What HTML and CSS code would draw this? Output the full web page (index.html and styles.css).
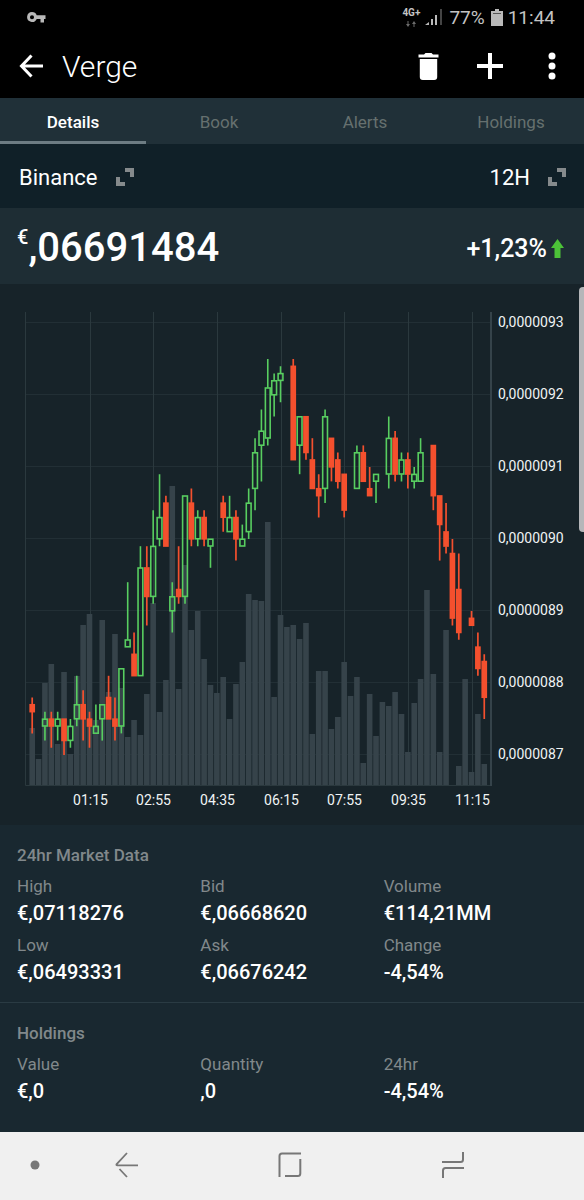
FILE: index.html
```html
<!DOCTYPE html>
<html lang="en">
<head>
    <meta charset="UTF-8">
    <meta name="viewport" content="width=device-width, initial-scale=1.0">
    <title>Verge</title>
    <link rel="stylesheet" href="styles.css">
</head>
<body>
    <div class="statusbar">
        <svg class="key" width="19" height="11" viewBox="0 0 19 11">
            <path fill="#b9b9b9" fill-rule="evenodd" d="M5 0a5 5 0 0 1 4.700 3.300H18.500V7H17v3.500h-3.500V7H9.700A5 5 0 1 1 5 0zM5 3.200a2 2 0 1 0 0 4.100 2 2 0 0 0 0-4.100z"/>
        </svg>
        <div class="network">
            <span>4G+</span>
            <svg width="10" height="6" viewBox="0 0 10 6">
                <path fill="#6b6b6b" d="M1.500 0h1v3h1.500L2 6 0 3h1.500zM7.500 6h1V3H10L8 0 6 3h1.500z"/>
            </svg>
        </div>
        <svg class="signal" width="17" height="17" viewBox="0 0 17 17">
            <path fill="#b9b9b9" d="M0 16l4-3v3zM6 10h2v6H6zM10 6h2v10h-2z"/>
            <path fill="#444" d="M15 0h2v16h-2z"/>
        </svg>
        <span class="percent">77%</span>
        <svg class="battery" width="12" height="17" viewBox="0 0 12 17">
            <path fill="#b9b9b9" d="M4 0h4v2h4v15H0V2h4z"/>
            <path fill="#555" d="M2 4h8v1H2z"/>
        </svg>
        <span>11:44</span>
    </div>

    <header class="appbar">
        <button class="back" aria-label="Back">
            <svg width="24" height="24" viewBox="0 0 24 24">
                <path d="M24 12H3M12.500 1.500L2.500 12l10 10.500" fill="none" stroke="#fff" stroke-width="3"/>
            </svg>
        </button>
        <h1>Verge</h1>
        <button aria-label="Delete">
            <svg width="21" height="27" viewBox="0 0 21 27">
                <path fill="#fff" d="M6 1.500L7.500 0h6L15 1.500h5.500v3H.5v-3zM1.800 6h17.400v18a3 3 0 0 1-3 3H4.800a3 3 0 0 1-3-3z"/>
            </svg>
        </button>
        <button aria-label="Add">
            <svg width="26" height="26" viewBox="0 0 26 26">
                <path fill="#fff" d="M11 0h4v11h11v4H15v11h-4V15H0v-4h11z"/>
            </svg>
        </button>
        <button aria-label="More">
            <svg width="8" height="28" viewBox="0 0 8 28">
                <g fill="#fff"><circle cx="4" cy="4" r="3.500"/><circle cx="4" cy="14" r="3.500"/><circle cx="4" cy="24" r="3.500"/></g>
            </svg>
        </button>
    </header>

    <nav class="tabs">
        <a href="#details" class="active">Details</a>
        <a href="#book">Book</a>
        <a href="#alerts">Alerts</a>
        <a href="#holdings">Holdings</a>
    </nav>

    <div class="market">
        <button>Binance
            <svg width="18" height="18" viewBox="0 0 18 18"><path fill="#858a8c" d="M9 0h9v9h-4V4H9zM0 9h4v5h5v4H0z"/></svg>
        </button>
        <button>12H
            <svg width="18" height="18" viewBox="0 0 18 18"><path fill="#858a8c" d="M9 0h9v9h-4V4H9zM0 9h4v5h5v4H0z"/></svg>
        </button>
    </div>

    <div class="price">
        <div class="amount"><sup>€</sup><span>,06691484</span></div>
        <div class="change">+1,23%
            <svg width="13" height="19" viewBox="0 0 13 19"><path fill="#4cc238" d="M6.500 0L13 9H9.500v10h-6V9H0z"/></svg>
        </div>
    </div>

    <main id="details">
        <div class="scrollbar"></div>
        <svg id="chart" viewBox="0 0 584 541" role="img" aria-label="Price chart"></svg>

        <section>
            <h2>24hr Market Data</h2>
            <dl>
                <div><dt>High</dt><dd>€,07118276</dd></div>
                <div><dt>Bid</dt><dd>€,06668620</dd></div>
                <div><dt>Volume</dt><dd>€114,21MM</dd></div>
                <div><dt>Low</dt><dd>€,06493331</dd></div>
                <div><dt>Ask</dt><dd>€,06676242</dd></div>
                <div><dt>Change</dt><dd>-4,54%</dd></div>
            </dl>
        </section>
        <section>
            <h2>Holdings</h2>
            <dl>
                <div><dt>Value</dt><dd>€,0</dd></div>
                <div><dt>Quantity</dt><dd>,0</dd></div>
                <div><dt>24hr</dt><dd>-4,54%</dd></div>
            </dl>
        </section>
    </main>

    <footer class="navbar">
        <button aria-label="Hide bar">
            <svg width="10" height="10" viewBox="0 0 10 10"><circle cx="5" cy="5" r="4.500" fill="#777"/></svg>
        </button>
        <button aria-label="Back">
            <svg width="24" height="26" viewBox="0 0 24 26"><path d="M12 1L1.500 12.300q-.5 1 .8 1H23M4.500 17L12 25" fill="none" stroke="#777" stroke-width="1.800"/></svg>
        </button>
        <button aria-label="Home">
            <svg width="24" height="26" viewBox="0 0 24 26"><path d="M1.500 25V4q0-2.500 2.500-2.500h19M22.300 7v14.500q0 2.500-2.500 2.500H7" fill="none" stroke="#777" stroke-width="2"/></svg>
        </button>
        <button aria-label="Recents">
            <svg width="24" height="26" viewBox="0 0 24 26"><path d="M22 0v7.500q0 2.500-2.500 2.500H1M2 26v-7.500Q2 16 4.500 16H23" fill="none" stroke="#777" stroke-width="2"/></svg>
        </button>
    </footer>

    <script>
        // [high, low, body top, body bottom, colour, volume], prices are steps above 0,0000087
        const candles = [
            [8, 3, 7, 6, 'r', 57], [0, 0, 0, 0, '', 26], [6, 2, 5, 4, 'g', 102], [6, 1, 5, 4, 'r', 121],
            [6, 2, 5, 4, 'g', 41], [5, 0, 5, 2, 'r', 113], [5, 1, 4, 2, 'g', 31], [11, 4, 7, 5, 'g', 109],
            [9, 2, 7, 5, 'r', 160], [6, 1, 5, 4, 'r', 171], [7, 3, 4, 3, 'g', 65], [7, 2, 7, 5, 'g', 165],
            [11, 5, 8, 5, 'r', 93], [8, 2, 5, 4, 'r', 151], [12, 3, 12, 4, 'g', 97], [24, 15, 16, 15, 'g', 48],
            [17, 11, 14, 11, 'r', 65], [29, 11, 26, 11, 'g', 50], [29, 18, 26, 22, 'r', 91], [34, 21, 29, 22, 'g', 182],
            [39, 29, 33, 30, 'g', 73], [36, 29, 35, 29, 'r', 105], [24, 17, 22, 20, 'g', 299], [29, 21, 23, 22, 'r', 96],
            [36, 21, 36, 22, 'g', 220], [37, 29, 35, 30, 'r', 155], [34, 29, 33, 30, 'g', 174], [34, 29, 33, 30, 'r', 126],
            [30, 26, 30, 29, 'g', 100], [0, 0, 0, 0, '', 92], [36, 31, 35, 33, 'r', 108], [36, 31, 33, 31, 'g', 66],
            [34, 27, 33, 30, 'r', 101], [32, 29, 30, 29, 'g', 123], [37, 30, 35, 31, 'g', 191], [44, 34, 42, 37, 'g', 185],
            [48, 38, 45, 43, 'g', 184], [55, 43, 51, 44, 'g', 263], [53, 47, 52, 50, 'g', 88], [54, 49, 53, 52, 'g', 170],
            [0, 0, 0, 0, '', 158], [55, 41, 54, 41, 'r', 160], [47, 39, 47, 43, 'g', 146], [47, 41, 47, 42, 'r', 162],
            [44, 37, 41, 37, 'r', 51], [39, 33, 37, 36, 'r', 114], [48, 35, 47, 37, 'g', 114], [44, 38, 44, 40, 'r', 56],
            [42, 37, 41, 38, 'r', 68], [39, 33, 39, 34, 'r', 123], [0, 0, 0, 0, '', 89], [43, 37, 42, 37, 'g', 108],
            [43, 38, 42, 38, 'r', 22], [40, 36, 37, 36, 'r', 91], [39, 35, 39, 38, 'g', 49], [0, 0, 0, 0, '', 83],
            [47, 37, 44, 39, 'g', 79], [45, 38, 44, 39, 'r', 93], [42, 38, 41, 39, 'g', 71], [42, 37, 41, 39, 'r', 33],
            [40, 37, 39, 38, 'g', 82], [44, 38, 42, 38, 'g', 106], [0, 0, 0, 0, '', 195], [43, 34, 43, 36, 'r', 111],
            [36, 27, 36, 32, 'r', 33], [35, 28, 31, 29, 'r', 155], [30, 18, 28, 19, 'r', 0], [28, 16, 23, 17, 'r', 19],
            [0, 0, 0, 0, '', 106], [20, 18, 19, 18, 'r', 13], [17, 11, 15, 12, 'r', 71], [14, 5, 13, 8, 'r', 21]
        ];
        const times = ['01:15', '02:55', '04:35', '06:15', '07:55', '09:35', '11:15'];
        const bottom = 501;

        function xOf(i) {
            return 32.2 + i * 6.367;
        }

        function yOf(price) {
            return 471 - price * 7.2;
        }

        function drawChart() {
            let svg = '';

            for (let i = 0; i < 7; i++) {
                const y = Math.round(yOf(i * 10)) - 0.5;
                svg += `<line class="grid" x1="25" x2="490" y1="${y}" y2="${y}"/>`;
                svg += `<text class="label" x="498" y="${y + 4.5}">0,00000${87 + i}</text>`;
            }
            times.forEach((time, i) => {
                const x = Math.round(xOf(9 + i * 10)) + 0.5;
                svg += `<line class="grid vertical" x1="${x}" x2="${x}" y1="28" y2="${bottom}"/>`;
                svg += `<text class="label time" x="${x}" y="521">${time}</text>`;
            });
            svg += `<path class="frame" d="M25.500 28V501.500H491"/><path class="axis" d="M491 28V502"/>`;

            candles.forEach((c, i) => {
                const x = xOf(i);
                svg += `<rect class="volume" x="${x - 2.8}" y="${bottom - c[5]}" width="5.600" height="${c[5]}"/>`;
            });
            candles.forEach((c, i) => {
                const [high, low, top, base, colour] = c;
                const x = xOf(i);
                if (colour === '') return;
                const wick = `<path d="M${x} ${yOf(high)}V${yOf(top)}M${x} ${yOf(base)}V${yOf(low)}"/>`;
                const inset = colour === 'g' ? 2.4 : 2;
                const body = `<rect x="${x - inset}" y="${yOf(top) + 0.2}" width="${inset * 2}" height="${(top - base) * 7.2 - 0.4}"/>`;
                svg += `<g class="${colour === 'g' ? 'up' : 'down'}">${wick}${body}</g>`;
            });

            document.getElementById('chart').innerHTML = svg;
        }

        drawChart();
    </script>
</body>
</html>
```

FILE: styles.css
```css
* {
    box-sizing: border-box;
}

body {
    margin: 0;
    min-height: 100vh;
    display: flex;
    flex-direction: column;
    background-color: #192830;
    color: #fff;
    font-family: Roboto, "Liberation Sans", sans-serif;
}

button {
    padding: 0;
    border: none;
    background: none;
    color: inherit;
    font: inherit;
    cursor: pointer;
}

svg {
    display: block;
}

.statusbar {
    display: flex;
    align-items: center;
    height: 34px;
    padding: 0 29px 0 27px;
    background-color: #000;
    color: #c4c4c4;
    font-size: 19px;
}

.key {
    margin-right: auto;
}

.network {
    display: flex;
    flex-direction: column;
    align-items: center;
    gap: 3px;
    margin-right: 5px;
    font-size: 10px;
    font-weight: bold;
    line-height: 10px;
}

.signal {
    margin-right: 7px;
}

.battery {
    margin: 0 5px 0 6px;
}

.appbar {
    display: flex;
    align-items: center;
    height: 64px;
    padding: 0 1px 0 19px;
    background-color: #000;
}

.appbar h1 {
    flex: 1;
    margin: 0;
    font-size: 30px;
    font-weight: 300;
}

.appbar button {
    display: flex;
    justify-content: center;
    align-items: center;
    width: 62px;
    height: 62px;
}

.appbar .back {
    justify-content: flex-start;
    width: 43px;
}

.tabs {
    display: flex;
    height: 46px;
    background-color: #203038;
}

.tabs a {
    flex: 1;
    border-bottom: 3px solid transparent;
    color: #66706f;
    font-size: 17px;
    line-height: 48px;
    text-align: center;
    text-decoration: none;
}

.tabs .active {
    border-color: #6d7c83;
    color: #fff;
    font-weight: 500;
}

.market {
    display: flex;
    justify-content: space-between;
    height: 64px;
    padding: 2px 18px 0 19px;
    background-color: #102028;
    font-size: 22px;
}

.market button {
    display: flex;
    align-items: center;
    gap: 18px;
}

.price {
    display: flex;
    justify-content: space-between;
    align-items: center;
    height: 76px;
    padding: 4px 20px 0 17px;
    background-color: #1e2d34;
    font-weight: 500;
}

.amount {
    display: flex;
    font-size: 40px;
    line-height: 50px;
}

.amount sup {
    font-size: 20px;
    line-height: 28px;
}

.change {
    display: flex;
    align-items: center;
    gap: 4px;
    font-size: 25px;
}

main {
    position: relative;
    flex: 1;
}

.scrollbar {
    position: absolute;
    top: 3px;
    right: 0;
    width: 5px;
    height: 245px;
    border-radius: 4px 0 0 4px;
    background-color: #b5b6b9;
}

#chart {
    width: 100%;
    background-color: #172329;
}

.grid {
    stroke: #222f35;
}

.vertical {
    stroke: #2b393e;
}

.frame {
    fill: none;
    stroke: #2b393e;
}

.axis {
    stroke: #35434a;
    stroke-width: 2;
}

.volume {
    fill: #36434a;
}

.label {
    fill: #f0f3f4;
    font-size: 14px;
}

.time {
    text-anchor: middle;
}

.up {
    fill: none;
    stroke: #58ce60;
    stroke-width: 1.6;
}

.down {
    fill: #f4502e;
    stroke: #f4502e;
    stroke-width: 1.7;
}

section {
    padding: 19px 17px 17px;
}

section + section {
    border-top: 1px solid #2a3b43;
}

h2 {
    margin: 0 0 6px;
    color: #81888b;
    font-size: 17px;
    font-weight: 500;
    line-height: 22px;
}

dl {
    display: grid;
    grid-template-columns: repeat(3, 1fr);
    row-gap: 5px;
    margin: 0;
}

dt {
    color: #81888b;
    font-size: 17px;
    line-height: 28px;
}

dd {
    margin: 0;
    font-size: 20px;
    font-weight: 500;
    line-height: 26px;
}

.navbar {
    display: grid;
    grid-template-columns: 69fr 115fr 211fr 116fr 73fr;
    height: 68px;
    padding-bottom: 3px;
    background-color: #f0f0f0;
}

.navbar button {
    display: flex;
    justify-content: center;
    align-items: center;
}
```
